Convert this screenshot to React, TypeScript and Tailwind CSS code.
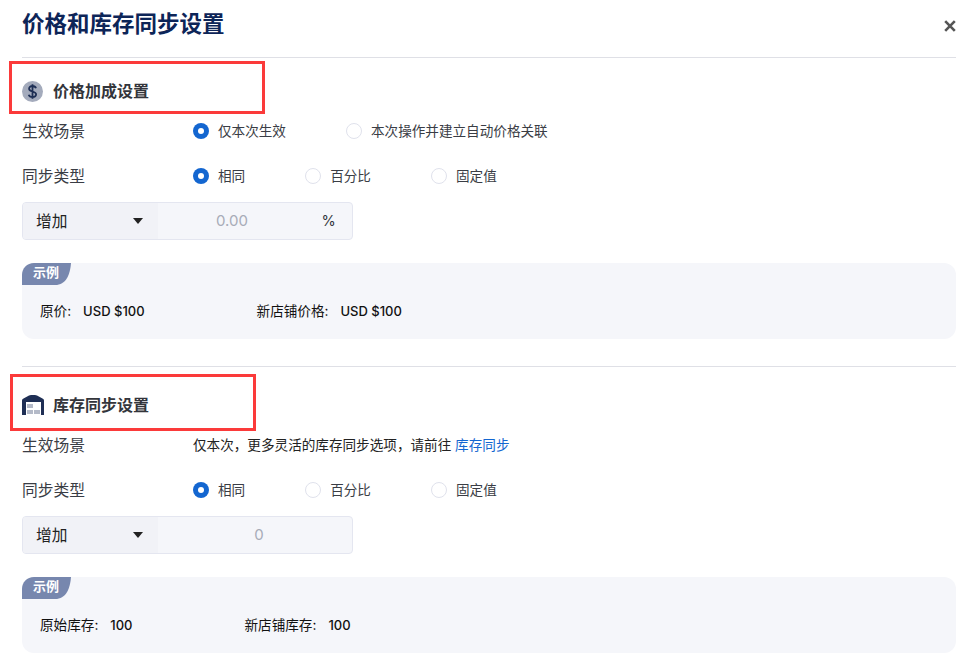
import React from "react";

const font = { fontFamily: '"Inter","Noto Sans CJK SC",sans-serif' };

function Radio({ checked, label }: { checked?: boolean; label: string }) {
  return (
    <div className="flex items-center gap-[9px]">
      {checked ? (
        <span className="w-4 h-4 rounded-full bg-[#1366d0] flex items-center justify-center">
          <span className="w-[6px] h-[6px] rounded-full bg-white" />
        </span>
      ) : (
        <span className="w-4 h-4 rounded-full border border-[#e0e2ec] bg-white" />
      )}
      <span className="text-[13.6px] leading-5 text-[#3a3d45]">{label}</span>
    </div>
  );
}

function Row({ label, children, className }: { label: string; children: React.ReactNode; className?: string }) {
  return (
    <div className={"flex items-center h-6 " + (className ?? "")}>
      <div className="w-[171px] pt-[2px] text-[15.75px] text-[#3a3d45]">{label}</div>
      <div className="flex items-center gap-[60px]">{children}</div>
    </div>
  );
}

function InputGroup({ value, suffix }: { value: string; suffix?: string }) {
  return (
    <div className="flex w-[331px] h-[38px] mt-[14px] rounded border border-[#e4e6f0] overflow-hidden bg-[#f5f6fa]">
      <div className="w-[135px] bg-[#f1f2f7] flex items-center justify-between pl-[13px] pr-[15px]">
        <span className="pt-[2px] text-[15.75px] text-[#222]">增加</span>
        <svg width="10" height="6" viewBox="0 0 10 6"><path d="M0 0h10L5 6z" fill="#222" /></svg>
      </div>
      <div className={"flex-1 flex items-center justify-center text-[15px] text-[#a8acb8] " + (suffix ? "pl-[1px]" : "pl-[8px]")}>{value}</div>
      {suffix ? <div className="w-[47px] flex items-center justify-center text-[14.5px] text-[#33363d]">{suffix}</div> : null}
    </div>
  );
}

function Example({ a, av, b, bv }: { a: string; av: string; b: string; bv: string }) {
  return (
    <div className="relative mt-[23px] h-[76px] rounded-xl bg-[#f5f6fa] flex items-center gap-[112px] pl-[18px] pt-[20px] text-[13.6px] text-[#111]">
      <div className="absolute left-0 top-0 w-[49px] h-[22px]">
        <svg width="49" height="22" viewBox="0 0 49 22" className="absolute left-0 top-0">
          <path d="M12 0H49C48 12 44 22 33 22H0V12C0 5 5 0 12 0Z" fill="#7787ae" />
        </svg>
        <span className="absolute left-[11px] top-[-1px] text-[13px] leading-[20px] font-bold text-white">示例</span>
      </div>
      <div className="flex items-center gap-[12px]"><span>{a}:</span><span className="pt-px text-[13px] font-medium">{av}</span></div>
      <div className="flex items-center gap-[12px]"><span>{b}:</span><span className="pt-px text-[13px] font-medium">{bv}</span></div>
    </div>
  );
}

function Highlight({ className }: { className: string }) {
  return <div className={"absolute border-[3px] border-[#fb3a3a] " + className} />;
}

export default function App() {
  return (
    <div className="relative w-[958px] h-[662px] overflow-hidden bg-white pl-[22px] pr-[2px]" style={font}>
      <div className="h-[58px] border-b border-[#dfe0e6] flex items-start justify-between pt-[6px]">
        <h1 className="text-[22.5px] leading-[36px] font-bold text-[#0d2558]">价格和库存同步设置</h1>
        <svg width="12" height="12" viewBox="0 0 12 12" className="mt-[14px]">
          <path d="M1.2 1.2l9.6 9.6M10.8 1.2l-9.6 9.6" stroke="#555" strokeWidth="2.6" />
        </svg>
      </div>

      <div className="flex items-center gap-[10px] h-6 mt-[21px]">
        <svg width="21" height="21" viewBox="0 0 21 21">
          <circle cx="10.5" cy="10.5" r="10.5" fill="#a4abbc" />
          <path d="M14 7.2C13.500 5.800 12.200 5 10.500 5 8.500 5 7.100 6.100 7.100 7.700c0 3.600 7 2 7 5.600 0 1.700-1.600 2.800-3.600 2.800-1.800 0-3.300-.8-3.800-2.300M10.500 3.200v14.600" fill="none" stroke="#1e2f55" strokeWidth="1.800" />
        </svg>
        <div className="text-[16px] font-bold text-[#33353b]">价格加成设置</div>
      </div>
      <Row label="生效场景" className="mt-[16px]">
        <Radio checked label="仅本次生效" />
        <Radio label="本次操作并建立自动价格关联" />
      </Row>
      <Row label="同步类型" className="mt-[21px]">
        <Radio checked label="相同" />
        <Radio label="百分比" />
        <Radio label="固定值" />
      </Row>
      <InputGroup value="0.00" suffix="%" />
      <Example a="原价" av="USD $100" b="新店铺价格" bv="USD $100" />

      <div className="h-px bg-[#dfe0e6] mt-[27px]" />

      <div className="flex items-center gap-[9px] h-6 mt-[26px]">
        <svg width="22" height="20" viewBox="0 0 22 20">
          <path d="M0 5.500Q0 4 1.500 3.400L7 .6Q8 0 9 0H13Q14 0 15 .6L20.500 3.400Q22 4 22 5.500V20H0Z" fill="#1f2f55" />
          <rect x="4" y="7" width="15" height="13" fill="#fff" />
          <rect x="5" y="9" width="6" height="4" fill="#b4bac8" />
          <rect x="5" y="15" width="6" height="4" fill="#b4bac8" />
          <rect x="12" y="15" width="6" height="4" fill="#b4bac8" />
        </svg>
        <div className="text-[16px] font-bold text-[#33353b]">库存同步设置</div>
      </div>
      <div className="flex items-center h-6 mt-[16px]">
        <div className="w-[171px] pt-[2px] text-[15.75px] text-[#3a3d45]">生效场景</div>
        <div className="text-[13.6px] text-[#222]">
          {"仅本次\uFF0C更多灵活的库存同步选项\uFF0C请前往 "}<span className="text-[#1366d0]">库存同步</span>
        </div>
      </div>
      <Row label="同步类型" className="mt-[21px]">
        <Radio checked label="相同" />
        <Radio label="百分比" />
        <Radio label="固定值" />
      </Row>
      <InputGroup value="0" />
      <Example a="原始库存" av="100" b="新店铺库存" bv="100" />

      <Highlight className="left-[9px] top-[61px] w-[256px] h-[53px]" />
      <Highlight className="left-[10px] top-[374px] w-[246px] h-[57px]" />
    </div>
  );
}
